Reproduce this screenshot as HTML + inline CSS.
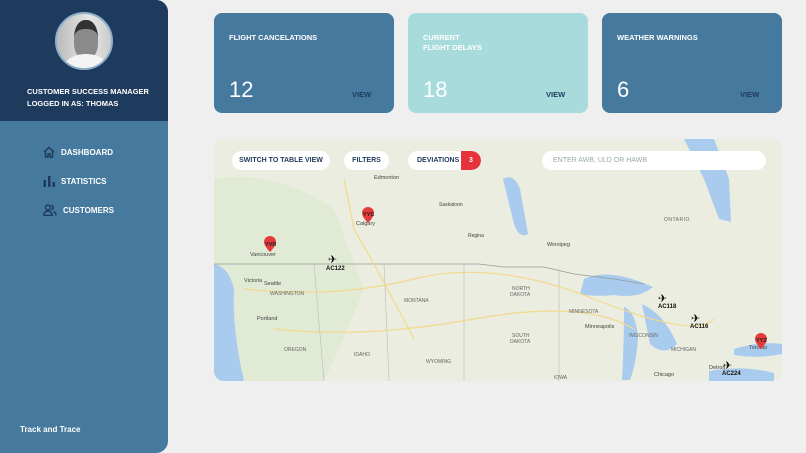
<!DOCTYPE html>
<html><head><meta charset="utf-8"><style>
*{box-sizing:border-box;margin:0;padding:0}
body{width:806px;height:453px;background:#efefef;font-family:"Liberation Sans",sans-serif;position:relative;overflow:hidden}
.side{position:absolute;left:0;top:0;width:168px;height:453px;background:#457a9e;border-radius:0 12px 12px 0;overflow:hidden}
.top{height:121px;background:#1e3a5c;position:relative}
.avatar{position:absolute;left:55px;top:12px;width:58px;height:58px;border-radius:50%;border:2px solid #8fb0cc;background:linear-gradient(90deg,#bbb,#e6e6e6 60%,#ccc);overflow:hidden}
.avatar:before{content:"";position:absolute;left:17px;top:6px;width:24px;height:30px;background:#8a8a8a;border-radius:45% 45% 40% 40%;border-top:9px solid #333}
.avatar:after{content:"";position:absolute;left:8px;top:40px;width:42px;height:24px;background:#f4f4f4;border-radius:50% 50% 0 0}
.role{position:absolute;left:27px;top:86px;color:#fff;font-size:7.5px;font-weight:bold;line-height:12px}
.nav{position:absolute;left:43px;color:#fff;font-size:8px;font-weight:bold;display:flex;align-items:center}
.nav svg{margin-right:6px}
.tt{position:absolute;left:20px;top:425px;color:#fff;font-size:8px;font-weight:bold}
.card{position:absolute;top:13px;width:180px;height:100px;border-radius:8px;background:#46799e;color:#fff}
.card .t{position:absolute;left:15px;top:20px;font-size:7.5px;font-weight:bold;line-height:10px}
.card .n{position:absolute;left:15px;top:65px;font-size:22px;line-height:24px}
.card .v{position:absolute;left:138px;top:77px;font-size:7.5px;font-weight:bold;color:#1e3a5c}
.map{position:absolute;left:214px;top:139px;width:568px;height:242px;border-radius:10px;overflow:hidden;background:#e9ecdf}
.btn{position:absolute;top:12px;height:19px;background:#fff;border-radius:10px;font-size:7px;font-weight:bold;color:#1e3a5c;display:flex;align-items:center;justify-content:center}
</style></head><body>
<div class="side">
 <div class="top"><div class="avatar"></div>
 <div class="role">CUSTOMER SUCCESS MANAGER<br>LOGGED IN AS: THOMAS</div></div>
 <div class="nav" style="top:146px"><svg width="12" height="12" viewBox="0 0 12 12" fill="none" stroke="#1e3a5c" stroke-width="1.5"><path d="M1 6L6 1.5 11 6M2.5 5v6h2.5V8h2v3h2.5V5"/></svg>DASHBOARD</div>
 <div class="nav" style="top:175px"><svg width="12" height="12" viewBox="0 0 12 12" fill="#1e3a5c"><rect x="0.5" y="5" width="2.5" height="7"/><rect x="5" y="1" width="2.5" height="11"/><rect x="9.5" y="7" width="2.5" height="5"/></svg>STATISTICS</div>
 <div class="nav" style="top:204px"><svg width="14" height="12" viewBox="0 0 14 12" fill="none" stroke="#1e3a5c" stroke-width="1.4"><circle cx="5" cy="3.5" r="2.5"/><path d="M0.8 11.5c0-3 2-4.5 4.2-4.5s4.2 1.5 4.2 4.5z"/><path d="M8.5 1.2a2.4 2.4 0 010 4.6M10.5 7.5c1.5.6 2.5 2 2.5 4"/></svg>CUSTOMERS</div>
 <div class="tt">Track and Trace</div>
</div>

<div class="card" style="left:214px"><div class="t">FLIGHT CANCELATIONS</div><div class="n">12</div><div class="v">VIEW</div></div>
<div class="card" style="left:408px;background:#a8dbdc"><div class="t">CURRENT<br>FLIGHT DELAYS</div><div class="n">18</div><div class="v">VIEW</div></div>
<div class="card" style="left:602px"><div class="t">WEATHER WARNINGS</div><div class="n">6</div><div class="v">VIEW</div></div>

<div class="map">
<svg width="568" height="242" viewBox="0 0 568 242" style="position:absolute;left:0;top:0">
 <rect width="568" height="242" fill="#eaede0"/>
 <path d="M0 40 Q60 30 120 70 L150 150 Q130 200 110 242 L0 242Z" fill="#dfe8d2" opacity=".8"/>
 <path d="M0 125 Q15 128 20 150 Q18 190 30 242 L0 242Z" fill="#a9cbee"/>
 <path d="M289 40 Q300 34 306 50 L314 95 Q305 100 300 85Z" fill="#a9cbee"/>
 <path d="M470 0 L500 0 L515 40 L517 83 L505 80 L490 40Z" fill="#a9cbee"/>
 <path d="M370 140 Q395 128 439 148 Q425 160 400 156 Q380 158 366 155Z" fill="#a9cbee"/>
 <path d="M410 168 Q422 172 424 200 Q422 225 416 241 L408 241 Q410 205 410 168Z" fill="#a9cbee"/>
 <path d="M428 165 Q450 175 463 205 Q450 218 436 205 Q432 185 428 165Z" fill="#a9cbee"/>
 <path d="M520 210 Q545 202 568 205 L568 215 Q545 220 520 216Z" fill="#a9cbee"/>
 <path d="M495 232 Q530 226 560 234 L560 242 L495 242Z" fill="#a9cbee"/>
 <path d="M0 125 L265 125 L290 128 L330 128 L360 135 L400 140 L430 145" stroke="#999" stroke-width=".7" fill="none"/>
 <path d="M100 125 L110 242 M170 125 L175 242 M250 125 L250 242 M345 130 L345 242" stroke="#bbb" stroke-width=".6" fill="none"/>
 <path d="M30 150 Q120 160 200 140 T380 160 T500 180 M60 190 Q150 200 260 180 T420 190 M130 40 L140 90 L160 125 L200 200" stroke="#f3d98c" stroke-width="1.2" fill="none"/>
 <text x="160" y="40" font-size="5.5" fill="#444">Edmonton</text>
 <text x="225" y="67" font-size="5" fill="#444">Saskatoon</text>
 <text x="254" y="98" font-size="5" fill="#444">Regina</text>
 <text x="333" y="107" font-size="5.5" fill="#444">Winnipeg</text>
 <text x="450" y="82" font-size="5" fill="#666" letter-spacing=".5">ONTARIO</text>
 <text x="30" y="143" font-size="5.5" fill="#444">Victoria</text>
 <text x="50" y="146" font-size="5.5" fill="#444">Seattle</text>
 <text x="56" y="156" font-size="5" fill="#666">WASHINGTON</text>
 <text x="43" y="181" font-size="5.5" fill="#444">Portland</text>
 <text x="190" y="163" font-size="5" fill="#666">MONTANA</text>
 <text x="298" y="151" font-size="5" fill="#666">NORTH</text><text x="296" y="157" font-size="5" fill="#666">DAKOTA</text>
 <text x="298" y="198" font-size="5" fill="#666">SOUTH</text><text x="296" y="204" font-size="5" fill="#666">DAKOTA</text>
 <text x="355" y="174" font-size="5" fill="#666">MINNESOTA</text>
 <text x="371" y="189" font-size="5.5" fill="#444">Minneapolis</text>
 <text x="415" y="198" font-size="5" fill="#666">WISCONSIN</text>
 <text x="457" y="212" font-size="5" fill="#666">MICHIGAN</text>
 <text x="70" y="212" font-size="5" fill="#666">OREGON</text>
 <text x="140" y="217" font-size="5" fill="#666">IDAHO</text>
 <text x="212" y="224" font-size="5" fill="#666">WYOMING</text>
 <text x="340" y="240" font-size="5" fill="#666">IOWA</text>
 <text x="440" y="237" font-size="5.5" fill="#444">Chicago</text>
 <text x="495" y="230" font-size="5.5" fill="#444">Detroit</text>
 <text x="535" y="210" font-size="5.5" fill="#444">Toronto</text>
 <text x="36" y="117" font-size="5.5" fill="#444">Vancouver</text>
 <text x="142" y="86" font-size="5.5" fill="#444">Calgary</text>
 <g fill="#e53a3a"><path d="M50 103a6 6 0 1112 0c0 4-6 10-6 10s-6-6-6-10z"/><path d="M148 74a6 6 0 1112 0c0 4-6 10-6 10s-6-6-6-10z"/><path d="M541 200a6 6 0 1112 0c0 4-6 10-6 10s-6-6-6-10z"/></g>
 <g font-size="5.5" font-weight="bold" fill="#222"><text x="51" y="107">YVR</text><text x="149" y="77">YYC</text><text x="542" y="203">YYZ</text></g>
 <g font-size="11" fill="#111" font-family="DejaVu Sans"><text x="114" y="124">✈</text><text x="444" y="163">✈</text><text x="477" y="183">✈</text><text x="509" y="230">✈</text></g>
 <g font-size="6" font-weight="bold" fill="#111"><text x="112" y="131">AC122</text><text x="444" y="169">AC118</text><text x="476" y="189">AC116</text><text x="508" y="236">AC224</text></g>
</svg>
<div class="btn" style="left:18px;width:98px">SWITCH TO TABLE VIEW</div>
<div class="btn" style="left:130px;width:45px">FILTERS</div>
<div class="btn" style="left:194px;width:73px;justify-content:flex-start;padding-left:9px;overflow:hidden">DEVIATIONS<span style="position:absolute;right:0;top:0;width:20px;height:19px;background:#e5323b;color:#fff;display:flex;align-items:center;justify-content:center;border-radius:0 10px 10px 0">3</span></div>
<div class="btn" style="left:328px;width:224px;justify-content:flex-start;padding-left:11px;color:#9aa;font-weight:normal">ENTER AWB, ULD OR HAWB</div>
</div>
</body></html>
